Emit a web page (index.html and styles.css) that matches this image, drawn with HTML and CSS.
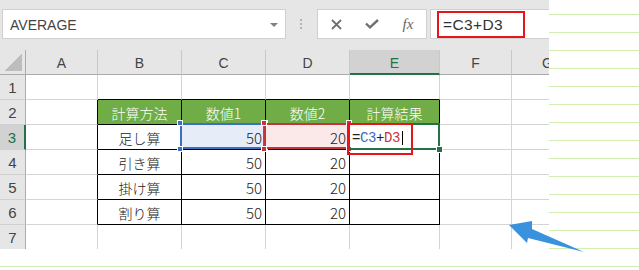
FILE: index.html
```html
<html>
<head><title>AVERAGE</title>
<link rel="stylesheet" href="styles.css">
</head>
<body>

<div class="excel">
  <div class="fbar">
    <div class="namebox"><span class="name">AVERAGE</span><i class="caret"></i></div>
    <div class="grip">
      <svg width="3" height="10" viewBox="0 0 3 10"><rect x="0" y="0" width="2" height="2" fill="#b5b5b5"/><rect x="0" y="4" width="2" height="2" fill="#b5b5b5"/><rect x="0" y="8" width="2" height="2" fill="#b5b5b5"/></svg>
    </div>
    <div class="btns">
      <span class="b"><svg width="11" height="11" viewBox="0 0 11 11"><path d="M1 1L10 10M10 1L1 10" stroke="#707070" stroke-width="1.8"/></svg></span>
      <span class="b"><svg width="14" height="10" viewBox="0 0 14 10"><path d="M1 4.5L5 8.3L13 1" fill="none" stroke="#707070" stroke-width="2.4"/></svg></span>
      <span class="b fx">fx</span>
    </div>
    <div class="formula"><span class="mark">=C3+D3</span></div>
  </div>

  <div class="sheet">
    <div class="c corner"><i class="tri"></i></div>
    <div class="c ch">A</div>
    <div class="c ch">B</div>
    <div class="c ch">C</div>
    <div class="c ch">D</div>
    <div class="c ch sel">E</div>
    <div class="c ch">F</div>
    <div class="c ch">G</div>

    <div class="c rh">1</div>
    <div class="c"></div>
    <div class="c bk-b"></div>
    <div class="c bk-b"></div>
    <div class="c bk-b"></div>
    <div class="c bk-b"></div>
    <div class="c"></div>
    <div class="c"></div>

    <div class="c rh">2</div>
    <div class="c bk-r"></div>
    <div class="c t th">計算方法</div>
    <div class="c t th">数値1</div>
    <div class="c t th">数値2</div>
    <div class="c t th">計算結果</div>
    <div class="c"></div>
    <div class="c"></div>

    <div class="c rh sel">3</div>
    <div class="c bk-r"></div>
    <div class="c t tx">足し算</div>
    <div class="c t num hl-blue">50
      <span class="ref blue"><i class="sq tl"></i><i class="sq tr"></i><i class="sq bl"></i><i class="sq br"></i></span>
    </div>
    <div class="c t num hl-red">20
      <span class="ref red"><i class="sq tl"></i><i class="sq tr"></i><i class="sq bl"></i><i class="sq br"></i></span>
    </div>
    <div class="c t">
      <span class="edit">=<b class="r1">C3</b>+<b class="r2">D3</b><i class="cursor"></i></span>
      <span class="act"><i class="handle"></i></span>
      <span class="note"></span>
    </div>
    <div class="c"></div>
    <div class="c"></div>

    <div class="c rh">4</div>
    <div class="c bk-r"></div>
    <div class="c t tx">引き算</div>
    <div class="c t num">50</div>
    <div class="c t num">20</div>
    <div class="c t"></div>
    <div class="c"></div>
    <div class="c"></div>

    <div class="c rh">5</div>
    <div class="c bk-r"></div>
    <div class="c t tx">掛け算</div>
    <div class="c t num">50</div>
    <div class="c t num">20</div>
    <div class="c t"></div>
    <div class="c"></div>
    <div class="c"></div>

    <div class="c rh">6</div>
    <div class="c bk-r"></div>
    <div class="c t tx">割り算</div>
    <div class="c t num">50</div>
    <div class="c t num">20</div>
    <div class="c t"></div>
    <div class="c"></div>
    <div class="c"></div>

    <div class="c rh">7</div>
    <div class="c"></div>
    <div class="c"></div>
    <div class="c"></div>
    <div class="c"></div>
    <div class="c"></div>
    <div class="c"></div>
    <div class="c"></div>
  </div>
</div>

<svg class="arrow" width="639" height="270" viewBox="0 0 639 270">
  <polygon points="509,225 532,221 532,229 584,252 528,238 527,243" fill="#3a92df"/>
</svg>

</body>
</html>
```

FILE: styles.css
```css
body {
margin: 0;
width: 639px;
height: 270px;
position: relative;
overflow: hidden;
background-color: #ffffff;
background-image: repeating-linear-gradient(to bottom, transparent 0, transparent 14px, #d3eeb1 14px, #d3eeb1 15px, transparent 15px, transparent 18px);
}

.excel {
width: 549px;
height: 249px;
background: #e6e6e6;
overflow: hidden;
}

/* formula bar */

.fbar {
display: flex;
align-items: flex-start;
height: 50px;
padding-top: 9px;
box-sizing: border-box;
}

.namebox {
flex-shrink: 0;
margin-left: 2px;
width: 284px;
height: 30px;
box-sizing: border-box;
border: 1px solid #d0d0d0;
background: #fff;
display: flex;
align-items: center;
padding: 1px 7px 0 7px;
font: 14px "Liberation Sans", sans-serif;
color: #444;
}

.namebox .name {
flex: 1;
}

.caret {
width: 0;
height: 0;
border-left: 4px solid transparent;
border-right: 4px solid transparent;
border-top: 4px solid #808080;
}

.grip {
flex-shrink: 0;
width: 31px;
height: 30px;
display: flex;
align-items: center;
justify-content: center;
}

.btns {
flex-shrink: 0;
width: 110px;
height: 30px;
box-sizing: border-box;
border: 1px solid #d0d0d0;
background: #fff;
display: flex;
}

.btns .b {
width: 36px;
display: flex;
align-items: center;
justify-content: center;
}

.btns .fx {
font: italic 15px "Liberation Serif", serif;
color: #666;
padding-top: 1px;
}

.formula {
flex-shrink: 0;
margin-left: 3px;
width: 160px;
height: 30px;
box-sizing: border-box;
border: 1px solid #d0d0d0;
background: #fff;
padding: 1px 0 0 6px;
}

.formula .mark {
display: flex;
align-items: center;
width: 88px;
height: 27px;
box-sizing: border-box;
border: 2px solid #e8141b;
padding: 1px 0 0 4px;
font: 15.5px "Liberation Sans", sans-serif;
letter-spacing: 0.4px;
color: #333;
}

/* sheet */

.sheet {
display: grid;
grid-template-columns: 26px 72px 84px 84px 84px 90px 72px 72px;
grid-auto-rows: 25px;
}

.c {
position: relative;
box-sizing: border-box;
border-right: 1px solid #d4d4d4;
border-bottom: 1px solid #d4d4d4;
background: #fff;
display: flex;
align-items: center;
font: 300 14px "Noto Sans CJK JP", sans-serif;
line-height: 1;
color: #222;
}

.corner {
background: #e6e6e6;
border-right-color: #ababab;
border-bottom-color: #ababab;
justify-content: flex-end;
align-items: flex-end;
padding: 0 3px 3px 0;
}

.corner .tri {
width: 17px;
height: 17px;
background: linear-gradient(to bottom right, transparent 50%, #bdbdbd 50%);
}

.ch {
background: #e6e6e6;
justify-content: center;
border-right-color: #c8c8c8;
border-bottom-color: #ababab;
font: 14px "Liberation Sans", sans-serif;
color: #444;
padding-top: 2px;
}

.ch.sel {
background: #d2d2d2;
color: #217346;
border-bottom: 2px solid #217346;
}

.rh {
background: #e6e6e6;
justify-content: center;
border-right-color: #ababab;
border-bottom-color: #d0d0d0;
font: 15px "Liberation Sans", sans-serif;
color: #444;
padding-top: 1px;
}

.rh.sel {
background: #d2d2d2;
color: #217346;
border-right: 2px solid #217346;
}

.bk-r {
border-right-color: #000;
}

.bk-b {
border-bottom-color: #000;
}

.t {
border-right-color: #000;
border-bottom-color: #000;
}

.th {
background: #70ad47;
color: #fff;
justify-content: center;
padding-top: 1px;
}

.tx {
justify-content: center;
padding-top: 1px;
}

.num {
justify-content: flex-end;
padding: 1px 3px 0 0;
font-size: 15px;
}

/* reference highlights */

.hl-blue {
background: #e6edf8;
}

.hl-red {
background: #fbe8e8;
}

.ref {
position: absolute;
top: -2px;
left: -2px;
right: 0;
bottom: 0;
border: 2px solid;
z-index: 2;
}

.ref.blue {
border-color: #3b6fc4;
}

.ref.red {
border-color: #c4343c;
}

.sq {
position: absolute;
width: 6px;
height: 6px;
box-sizing: border-box;
border: 1px solid #fff;
z-index: 5;
}

.blue .sq {
background: #3b6fc4;
}

.red .sq {
background: #c4343c;
}

.sq.tl { left: -5px; top: -5px; }
.sq.tr { right: -5px; top: -5px; }
.sq.bl { left: -5px; bottom: -5px; }
.sq.br { right: -5px; bottom: -5px; }

/* active cell */

.edit {
padding: 1px 0 0 2px;
font: 14px "Liberation Mono", monospace;
letter-spacing: -0.4px;
color: #222;
display: flex;
align-items: center;
}

.edit b {
font-weight: normal;
}

.edit .r1 {
color: #3b6fc4;
}

.edit .r2 {
color: #c4343c;
}

.cursor {
display: inline-block;
width: 1px;
height: 14px;
background: #000;
margin-left: 2px;
}

.act {
position: absolute;
top: -2px;
left: -2px;
right: -1px;
bottom: -1px;
border: 2px solid #217346;
z-index: 3;
}

.handle {
position: absolute;
right: -5px;
bottom: -5px;
width: 7px;
height: 7px;
box-sizing: border-box;
border: 1px solid #fff;
background: #217346;
}

.note {
position: absolute;
left: -3px;
top: -2px;
width: 66px;
height: 32px;
box-sizing: border-box;
border: 2px solid #e8141b;
z-index: 6;
}

.arrow {
position: absolute;
left: 0;
top: 0;
}
```
